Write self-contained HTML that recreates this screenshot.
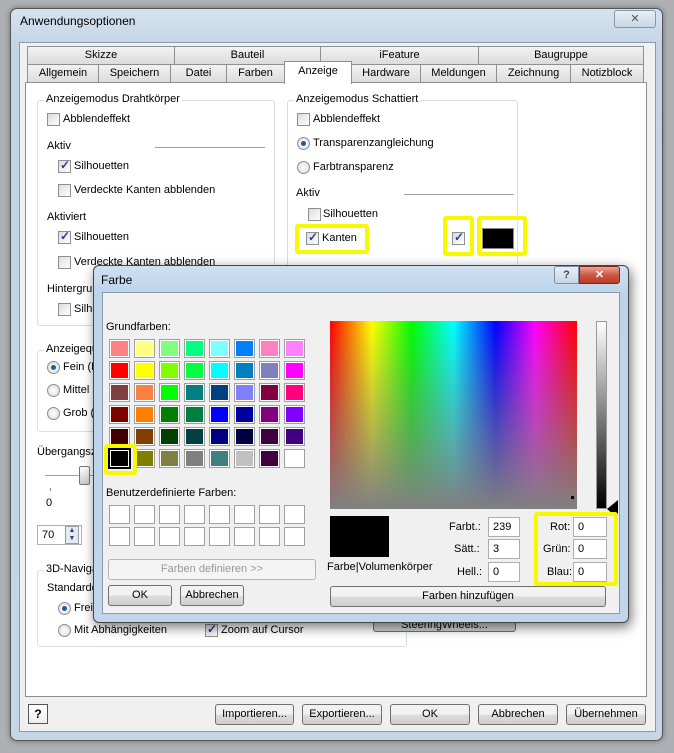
<!DOCTYPE html>
<html><head><meta charset="utf-8"><style>
*{box-sizing:border-box;margin:0;padding:0}
body{width:674px;height:753px;background:#aeb0b4;position:relative;overflow:hidden;font-family:"Liberation Sans",sans-serif;font-size:11px;color:#000}
.a{position:absolute;white-space:nowrap}
.win{left:10px;top:8px;width:653px;height:733px;border:1px solid #555;border-radius:7px;background:linear-gradient(#d5e3f1,#c3d3e4 40px,#c7d6e6);box-shadow:0 0 6px rgba(0,0,0,.4)}
.client{left:19px;top:42px;width:637px;height:690px;background:#f0f0f0;border:1px solid #8a9bb0}
.panel{left:25px;top:82px;width:622px;height:615px;background:#fff;border:1px solid #8e8f8f}
.tab{position:absolute;height:19px;border:1px solid #8e8f8f;background:linear-gradient(#f2f2f2,#dcdcdc);text-align:center;line-height:16px;font-size:11px}
.grp{position:absolute;border:1px solid #d5dfe5;border-radius:3px}
.lg{position:absolute;background:#fff;padding:0 2px;top:-8px;left:6px}
.cb{position:absolute;width:13px;height:13px;border:1px solid #8f8f8f;background:linear-gradient(135deg,#dcdcdc,#fff)}
.cb.on::after{content:"✓";position:absolute;left:1px;top:-3px;font-size:12px;color:#2a3f8f;font-weight:bold}
.rb{position:absolute;width:13px;height:13px;border:1px solid #8f8f8f;border-radius:50%;background:radial-gradient(#fff,#d8d8d8)}
.rb.on::after{content:"";position:absolute;left:3px;top:3px;width:5px;height:5px;border-radius:50%;background:#1c5d9e}
.btn{position:absolute;height:21px;border:1px solid #707070;border-radius:3px;background:linear-gradient(#f2f2f2 50%,#dddddd 50%,#cfcfcf);text-align:center;line-height:19px}
.hl{position:absolute;border:4px solid #f8f800;border-radius:3px}
.sw{position:absolute;width:19px;height:17px;border:1px solid #fff;outline:1px solid #a0a0a0}
.inp{position:absolute;background:#fff;border:1px solid #abadb3;height:20px;line-height:18px;padding-left:4px}
.line{position:absolute;height:1px;background:#a0a0a0}
</style></head><body>
<div class="a win"></div>
<div class="a" style="left:20px;top:14px;font-size:12px">Anwendungsoptionen</div>
<div class="a" style="left:614px;top:10px;width:42px;height:18px;border:1px solid #8797aa;border-radius:3px;background:linear-gradient(#e7eef6,#c9d6e4);text-align:center;line-height:16px;color:#555">✕</div>
<div class="a client"></div>
<div class="a panel"></div>
<div class="tab" style="left:27px;top:46px;width:148px">Skizze</div>
<div class="tab" style="left:174px;top:46px;width:147px">Bauteil</div>
<div class="tab" style="left:320px;top:46px;width:159px">iFeature</div>
<div class="tab" style="left:478px;top:46px;width:166px">Baugruppe</div>
<div class="tab" style="left:27px;top:64px;width:72px">Allgemein</div>
<div class="tab" style="left:98px;top:64px;width:73px">Speichern</div>
<div class="tab" style="left:170px;top:64px;width:57px">Datei</div>
<div class="tab" style="left:226px;top:64px;width:59px">Farben</div>
<div class="tab" style="left:284px;top:61px;width:68px;height:23px;background:#fff;border-bottom:none;line-height:18px">Anzeige</div>
<div class="tab" style="left:351px;top:64px;width:70px">Hardware</div>
<div class="tab" style="left:420px;top:64px;width:77px">Meldungen</div>
<div class="tab" style="left:496px;top:64px;width:75px">Zeichnung</div>
<div class="tab" style="left:570px;top:64px;width:74px">Notizblock</div>
<div class="grp" style="left:37px;top:100px;width:238px;height:226px"><span class="lg">Anzeigemodus Drahtkörper</span></div>
<div class="cb" style="left:47px;top:113px"></div><div class="a" style="left:63px;top:113px">Abblendeffekt</div>
<div class="a" style="left:47px;top:140px">Aktiv</div><div class="line" style="left:155px;top:147px;width:110px"></div>
<div class="cb on" style="left:58px;top:160px"></div><div class="a" style="left:74px;top:160px">Silhouetten</div>
<div class="cb" style="left:58px;top:184px"></div><div class="a" style="left:74px;top:184px">Verdeckte Kanten abblenden</div>
<div class="a" style="left:47px;top:211px">Aktiviert</div>
<div class="cb on" style="left:58px;top:231px"></div><div class="a" style="left:74px;top:231px">Silhouetten</div>
<div class="cb" style="left:58px;top:256px"></div><div class="a" style="left:74px;top:256px">Verdeckte Kanten abblenden</div>
<div class="a" style="left:47px;top:283px">Hintergru</div>
<div class="cb" style="left:58px;top:303px"></div><div class="a" style="left:74px;top:303px">Silho</div>
<div class="grp" style="left:37px;top:350px;width:238px;height:82px"><span class="lg">Anzeigequ</span></div>
<div class="rb on" style="left:47px;top:361px"></div><div class="a" style="left:63px;top:361px">Fein (L</div>
<div class="rb" style="left:47px;top:384px"></div><div class="a" style="left:63px;top:384px">Mittel</div>
<div class="rb" style="left:47px;top:407px"></div><div class="a" style="left:63px;top:407px">Grob (</div>
<div class="a" style="left:37px;top:446px">Übergangsz</div>
<div class="line" style="left:45px;top:475px;width:50px"></div>
<div class="a" style="left:79px;top:466px;width:11px;height:19px;border:1px solid #777;border-radius:2px;background:linear-gradient(#fff,#ccc)"></div>
<div class="a" style="left:50px;top:488px;width:1px;height:3px;background:#888"></div>
<div class="a" style="left:46px;top:497px">0</div>
<div class="inp" style="left:37px;top:525px;width:45px">70</div>
<div class="a" style="left:65px;top:526px;width:14px;height:18px;border:1px solid #99a;background:#e4eaf2;font-size:7px;line-height:8px;text-align:center;color:#446">▲<br>▼</div>
<div class="grp" style="left:37px;top:570px;width:370px;height:77px"><span class="lg">3D-Naviga</span></div>
<div class="a" style="left:47px;top:582px">Standardo</div>
<div class="rb on" style="left:58px;top:602px"></div><div class="a" style="left:74px;top:602px">Frei</div>
<div class="rb" style="left:58px;top:624px"></div><div class="a" style="left:74px;top:624px">Mit Abhängigkeiten</div>
<div class="cb on" style="left:205px;top:624px"></div><div class="a" style="left:221px;top:624px">Zoom auf Cursor</div>
<div class="btn" style="left:373px;top:611px;width:143px;height:21px;line-height:26px;overflow:hidden">SteeringWheels...</div>
<div class="grp" style="left:287px;top:100px;width:231px;height:170px;border-bottom:none"><span class="lg">Anzeigemodus Schattiert</span></div>
<div class="cb" style="left:297px;top:113px"></div><div class="a" style="left:313px;top:113px">Abblendeffekt</div>
<div class="rb on" style="left:297px;top:137px"></div><div class="a" style="left:313px;top:137px">Transparenzangleichung</div>
<div class="rb" style="left:297px;top:161px"></div><div class="a" style="left:313px;top:161px">Farbtransparenz</div>
<div class="a" style="left:296px;top:187px">Aktiv</div><div class="line" style="left:404px;top:194px;width:110px"></div>
<div class="cb" style="left:308px;top:208px"></div><div class="a" style="left:323px;top:208px">Silhouetten</div>
<div class="cb on" style="left:306px;top:232px"></div><div class="a" style="left:322px;top:232px">Kanten</div>
<div class="cb on" style="left:452px;top:232px"></div>
<div class="a" style="left:482px;top:228px;width:32px;height:21px;background:#000;border:1px solid #888"></div>
<div class="hl" style="left:295px;top:224px;width:74px;height:30px"></div>
<div class="hl" style="left:443px;top:216px;width:31px;height:40px"></div>
<div class="hl" style="left:477px;top:216px;width:50px;height:40px"></div>
<div class="a" style="left:28px;top:704px;width:20px;height:20px;border:1px solid #555;background:linear-gradient(#fff,#eee);text-align:center;line-height:18px;font-weight:bold;font-size:12px">?</div>
<div class="btn" style="left:215px;top:704px;width:79px">Importieren...</div>
<div class="btn" style="left:302px;top:704px;width:80px">Exportieren...</div>
<div class="btn" style="left:390px;top:704px;width:80px">OK</div>
<div class="btn" style="left:478px;top:704px;width:80px">Abbrechen</div>
<div class="btn" style="left:566px;top:704px;width:80px">Übernehmen</div>
<div class="a" style="left:93px;top:265px;width:536px;height:358px;border:1px solid #444;border-radius:6px;background:linear-gradient(#cfe0f1,#bcd3ea 30px,#c1d6ec);box-shadow:2px 4px 12px rgba(0,0,0,.55)"></div>
<div class="a" style="left:101px;top:273px;font-size:12px">Farbe</div>
<div class="a" style="left:554px;top:266px;width:25px;height:18px;border:1px solid #7d8ea5;border-radius:3px 0 0 3px;background:linear-gradient(#e8eff7,#c8d6e6);text-align:center;line-height:16px;font-weight:bold;color:#445">?</div>
<div class="a" style="left:579px;top:266px;width:41px;height:18px;border:1px solid #7a2a20;border-radius:0 3px 3px 0;background:linear-gradient(#e8a496,#c85a45 50%,#c03a22);text-align:center;line-height:16px;color:#fff;font-weight:bold">✕</div>
<div class="a" style="left:102px;top:292px;width:518px;height:322px;background:#f0f0f0;border:1px solid #8a9bb0"></div>
<div class="a" style="left:106px;top:321px">Grundfarben:</div>
<div class="a" style="left:106px;top:487px">Benutzerdefinierte Farben:</div>
<div id="g"></div>
<div class="btn" style="left:108px;top:559px;width:208px;border-color:#b5b5b5;background:#f4f4f4;color:#999">Farben definieren &gt;&gt;</div>
<div class="btn" style="left:108px;top:585px;width:64px">OK</div>
<div class="btn" style="left:180px;top:585px;width:64px">Abbrechen</div>
<div class="a" style="left:330px;top:321px;width:247px;height:188px;background:linear-gradient(to bottom,rgba(128,128,128,0),#808080),linear-gradient(to right,#f00,#ff0 17%,#0f0 33%,#0ff 50%,#00f 67%,#f0f 83%,#f00)"></div>
<div class="a" style="left:571px;top:496px;width:3px;height:3px;background:#000"></div>
<div class="a" style="left:596px;top:321px;width:11px;height:188px;background:linear-gradient(#fff,#000);border:1px solid #999"></div>
<div class="a" style="left:607px;top:500px;width:0;height:0;border-top:9px solid transparent;border-bottom:9px solid transparent;border-right:11px solid #000"></div>
<div class="a" style="left:330px;top:516px;width:59px;height:41px;background:#000"></div>
<div class="a" style="left:327px;top:561px">Farbe|Volumenkörper</div>
<div class="a" style="left:449px;top:521px">Farbt.:</div><div class="inp" style="left:488px;top:517px;width:32px">239</div>
<div class="a" style="left:454px;top:543px">Sätt.:</div><div class="inp" style="left:488px;top:539px;width:32px">3</div>
<div class="a" style="left:457px;top:566px">Hell.:</div><div class="inp" style="left:488px;top:562px;width:32px">0</div>
<div class="a" style="left:550px;top:521px">Rot:</div><div class="inp" style="left:573px;top:517px;width:34px">0</div>
<div class="a" style="left:543px;top:543px">Grün:</div><div class="inp" style="left:573px;top:539px;width:34px">0</div>
<div class="a" style="left:547px;top:566px">Blau:</div><div class="inp" style="left:573px;top:562px;width:34px">0</div>
<div class="hl" style="left:534px;top:512px;width:84px;height:74px"></div>
<div class="btn" style="left:330px;top:586px;width:276px">Farben hinzufügen</div>
<div class="hl" style="left:104px;top:444px;width:33px;height:31px"></div>
<script>
var c=["#ff8080","#ffff80","#80ff80","#00ff80","#80ffff","#0080ff","#ff80c0","#ff80ff",
"#ff0000","#ffff00","#80ff00","#00ff40","#00ffff","#0080c0","#8080c0","#ff00ff",
"#804040","#ff8040","#00ff00","#008080","#004080","#8080ff","#800040","#ff0080",
"#800000","#ff8000","#008000","#008040","#0000ff","#0000a0","#800080","#8000ff",
"#400000","#804000","#004000","#004040","#000080","#000040","#400040","#400080",
"#000000","#808000","#808040","#808080","#408080","#c0c0c0","#400040","#ffffff"];
var h="";
for(var i=0;i<48;i++){var r=Math.floor(i/8),k=i%8;h+='<div class="sw" style="left:'+(110+k*25)+'px;top:'+(340+r*22)+'px;background:'+c[i]+(i==40?';border-color:#fff;outline:2px solid #000':'')+'"></div>';}
for(var i=0;i<16;i++){var r=Math.floor(i/8),k=i%8;h+='<div class="sw" style="left:'+(110+k*25)+'px;top:'+(506+r*22)+'px;background:#fff"></div>';}
document.getElementById("g").innerHTML=h;
</script>
</body></html>
